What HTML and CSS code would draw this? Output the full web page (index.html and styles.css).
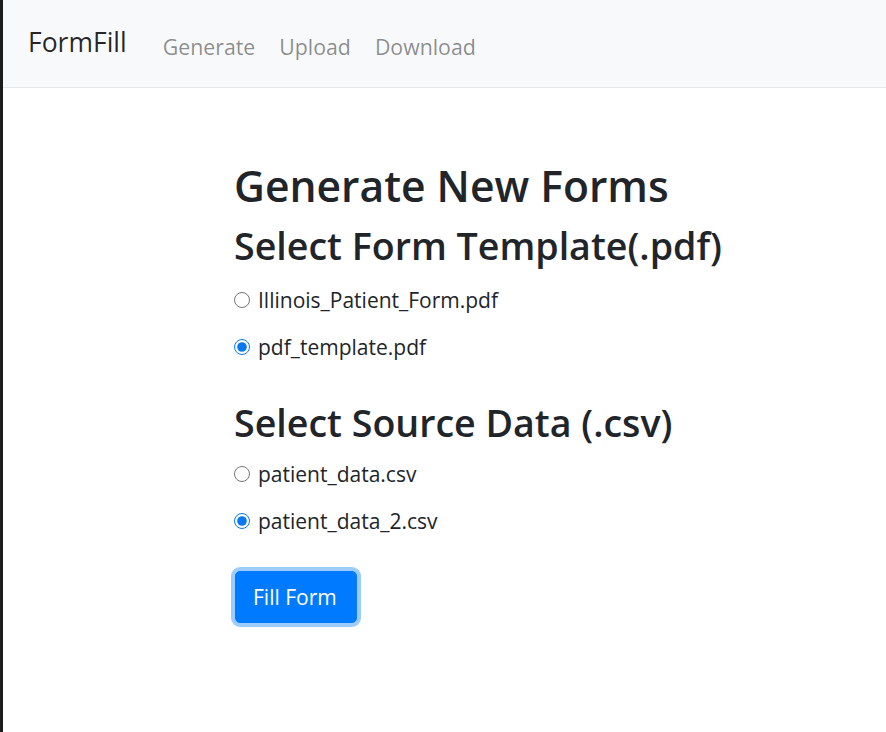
FILE: index.html
```html
<!DOCTYPE html>
<html lang="en">
<head>
<meta charset="utf-8">
<title>FormFill</title>
<link rel="stylesheet" href="styles.css">
</head>
<body>
<nav class="navbar">
  <a class="brand" href="#">FormFill</a>
  <ul class="nav-links">
    <li><a href="#">Generate</a></li>
    <li><a href="#">Upload</a></li>
    <li><a href="#">Download</a></li>
  </ul>
</nav>
<main class="content">
  <h1 class="title">Generate New Forms</h1>
  <form class="gen-form">
    <h2 class="section-title">Select Form Template(.pdf)</h2>
    <div class="options">
      <label class="option"><input type="radio" name="template"> Illinois_Patient_Form.pdf</label>
      <label class="option"><input type="radio" name="template" checked> pdf_template.pdf</label>
    </div>
    <h2 class="section-title second">Select Source Data (.csv)</h2>
    <div class="options">
      <label class="option"><input type="radio" name="data"> patient_data.csv</label>
      <label class="option"><input type="radio" name="data" checked> patient_data_2.csv</label>
    </div>
    <button type="button" class="btn-primary">Fill Form</button>
  </form>
</main>
</body>
</html>
```

FILE: styles.css
```css
html, body {
  margin: 0;
  padding: 0;
  background: #ffffff;
}
body {
  border-left: 3px solid #1c1c1c;
  min-height: 732px;
  box-sizing: border-box;
  font-family: "Open Sans", "Noto Sans", sans-serif;
  color: #212529;
}
.navbar {
  display: flex;
  align-items: center;
  height: 87px;
  background: #f8f9fa;
  border-bottom: 1px solid #e6e7e8;
  padding-left: 25px;
  box-sizing: content-box;
}
.brand {
  font-size: 26.5px;
  color: rgba(0, 0, 0, 0.85);
  text-decoration: none;
  margin-right: 36px;
  margin-top: -4px;
}
.nav-links {
  list-style: none;
  display: flex;
  gap: 24px;
  margin: 6px 0 0;
  padding: 0;
}
.nav-links a {
  font-size: 21.3px;
  color: rgba(0, 0, 0, 0.45);
  text-decoration: none;
}
.content {
  padding: 72px 0 0 231px;
}
.title {
  font-size: 42.6px;
  font-weight: 600;
  line-height: 1.2;
  margin: 0 0 12px;
}
.section-title {
  font-size: 37.6px;
  font-weight: 600;
  line-height: 1.2;
  margin: 0 0 17px;
}
.section-title.second {
  margin-top: 38px;
  margin-bottom: 14px;
}
.options {
  display: flex;
  flex-direction: column;
  gap: 17px;
}
.option {
  display: flex;
  align-items: center;
  font-size: 21px;
  line-height: 30px;
}
.option input {
  width: 16px;
  height: 16px;
  margin: 0 8px 0 0;
  accent-color: #0a78f0;
}
.btn-primary {
  margin-top: 35px;
  margin-left: 1px;
  font-family: inherit;
  font-size: 21px;
  color: #fff;
  background: #007bff;
  border: 1px solid #007bff;
  border-radius: 5px;
  padding: 10px 19px 10px 17px;
  line-height: 30px;
  box-shadow: 0 0 0 4px rgba(38, 143, 255, 0.45);
}
```
